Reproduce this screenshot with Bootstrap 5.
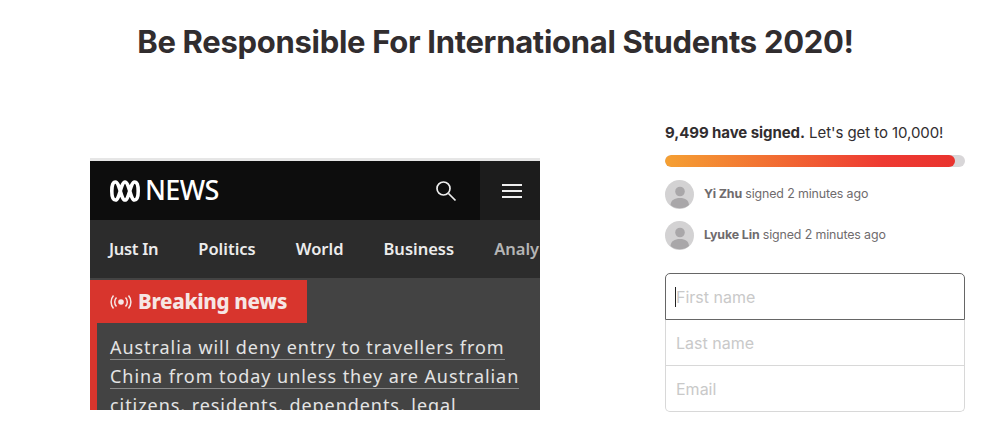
<!DOCTYPE html>
<html lang="en">
<head>
<meta charset="utf-8">
<title>Be Responsible For International Students 2020!</title>
<link href="https://cdn.jsdelivr.net/npm/bootstrap@5.3.0/dist/css/bootstrap.min.css" rel="stylesheet">
<style>
html,body{height:427px;overflow:hidden;background:#fff}
body{font-family:Inter,"Liberation Sans",sans-serif;color:#312d2f}
.pg-title{font-size:31px;font-weight:700;line-height:40px;padding:22px 0 0 8px;margin:0;letter-spacing:-.3px;color:#312d2f}
.pg-main{padding:0 18px 0 90px;margin-top:61px}
.shot{width:450px;height:252px;margin-top:35px;overflow:hidden;border-top:3px solid #e6e6e6;background:#434343;font-family:"Noto Sans",sans-serif}
.shot-top{height:59px;background:#0d0d0d}
.shot-logo{padding-left:20px;gap:5px;color:#fff;font-size:27px;font-weight:500;letter-spacing:-.6px}
.shot-search{padding-right:23px}
.shot-menu{width:60px;background:#1c1c1c;padding-left:3px}
.shot-nav{height:58px;background:#2c2c2c;color:#ececec;font-size:16.5px;font-weight:600;padding-left:19px;gap:40px;white-space:nowrap;overflow:hidden}
.shot-nav span:first-child{letter-spacing:-.3px}
.shot-nav span:last-child{color:#b5b5b5}
.shot-flag{width:217px;height:43px;margin-top:2px;background:#d8352d;color:#f6e6e4;font-size:20.5px;font-weight:800;padding-left:20px;gap:6px;letter-spacing:-.3px}
.shot-story{border-left:7px solid #d8352d;padding:13px 0 0 13px;color:#e4e4e4;font-size:18px;letter-spacing:.94px;white-space:nowrap}
.shot-story span{display:block;width:fit-content;line-height:23px;margin-bottom:5px;border-bottom:1px solid #8a8a8a}
.side{width:300px}
.goal{font-size:15px;line-height:20px;margin:0 0 12px;letter-spacing:-.07px}
.goal b{font-weight:700}
.goal-track{height:12px;border-radius:6px;background:#d8d6d8}
.goal-fill{background:linear-gradient(90deg,#f5a033,#ee3a32 75%,#e9332e);border-radius:6px}
.signer{height:41px;gap:10px;font-size:12.4px;color:#6f6b6d;letter-spacing:-.13px}
.signer b{font-weight:700}
.signer svg{flex:none}
.signers{margin-top:7px}
.sign-form{margin-top:17px;position:relative}
.sign-form .form-control{height:46px;border-radius:0;border:1px solid #d8d8d8;border-top-width:0;padding:0 10px;font-size:16px;font-family:Inter,sans-serif;box-shadow:none}
.sign-form .form-control::placeholder{color:#c9c9c9;opacity:1}
.sign-form .form-control:first-of-type{height:47px;border:1px solid #666;border-radius:5px 5px 0 0}
.sign-form .form-control:last-of-type{border-radius:0 0 5px 5px}
.caret-mark{position:absolute;left:10px;top:14px;width:1px;height:20px;background:#222}
</style>
</head>
<body>
<h1 class="pg-title text-center">Be Responsible For International Students 2020!</h1>
<div class="pg-main d-flex justify-content-between align-items-start">
  <div class="shot">
    <div class="shot-top d-flex align-items-center">
      <div class="shot-logo d-flex align-items-center flex-grow-1">
        <svg width="30" height="22" viewBox="0 0 30 22" fill="none" stroke="#fff" stroke-width="3.600"><path d="M5.500 2C3 2 1.800 5 1.800 11S3 20 5.500 20C9.500 20 11 2 15 2S20.500 20 24.500 20C27 20 28.200 17 28.200 11S27 2 24.500 2C20.500 2 19 20 15 20S9.500 2 5.500 2Z"/></svg>
        <span>NEWS</span>
      </div>
      <div class="shot-search d-flex">
        <svg width="22" height="22" viewBox="0 0 22 22" fill="none" stroke="#eee" stroke-width="1.700"><circle cx="8.500" cy="8.500" r="6.500"/><path d="M13.500 13.500 20.500 20.500"/></svg>
      </div>
      <div class="shot-menu h-100 d-flex align-items-center justify-content-center">
        <svg width="20" height="14" viewBox="0 0 20 14" fill="#eee"><rect y="0" width="20" height="2"/><rect y="6" width="20" height="2"/><rect y="12" width="20" height="2"/></svg>
      </div>
    </div>
    <div class="shot-nav d-flex align-items-center"><span>Just In</span><span>Politics</span><span>World</span><span>Business</span><span>Analy</span></div>
    <div class="shot-flag d-flex align-items-center">
      <svg width="22" height="14" viewBox="0 0 22 14" fill="none" stroke="#f6e6e4" stroke-width="1.500"><circle cx="11" cy="7" r="2.800" fill="#f6e6e4" stroke="none"/><path d="M6.500 2.500a6.500 6.500 0 0 0 0 9M15.500 2.500a6.500 6.500 0 0 1 0 9M3.500 .5a10 10 0 0 0 0 13M18.500 .5a10 10 0 0 1 0 13"/></svg>
      <span>Breaking news</span>
    </div>
    <div class="shot-story">
      <span>Australia will deny entry to travellers from</span>
      <span>China from today unless they are Australian</span>
      <span>citizens, residents, dependents, legal</span>
    </div>
  </div>
  <div class="side">
    <p class="goal"><b>9,499 have signed.</b> Let's get to 10,000!</p>
    <div class="progress goal-track"><div class="progress-bar goal-fill" style="width:96.500%"></div></div>
    <div class="signers">
      <div class="signer d-flex align-items-center">
        <svg width="29" height="29" viewBox="0 0 29 29"><circle cx="14.500" cy="14.500" r="14.500" fill="#d3d2d3"/><circle cx="15" cy="11.500" r="4.800" fill="#a9a7a9"/><path d="M5.500 25c.5-5 4-7 9.500-7s8.500 2 9 7a14.500 14.500 0 0 1-18.500 0Z" fill="#a9a7a9"/></svg>
        <div><b>Yi Zhu</b> signed 2 minutes ago</div>
      </div>
      <div class="signer d-flex align-items-center">
        <svg width="29" height="29" viewBox="0 0 29 29"><circle cx="14.500" cy="14.500" r="14.500" fill="#d3d2d3"/><circle cx="15" cy="11.500" r="4.800" fill="#a9a7a9"/><path d="M5.500 25c.5-5 4-7 9.500-7s8.500 2 9 7a14.500 14.500 0 0 1-18.500 0Z" fill="#a9a7a9"/></svg>
        <div><b>Lyuke Lin</b> signed 2 minutes ago</div>
      </div>
    </div>
    <form class="sign-form">
      <input class="form-control" type="text" placeholder="First name">
      <input class="form-control" type="text" placeholder="Last name">
      <input class="form-control" type="email" placeholder="Email">
      <span class="caret-mark"></span>
    </form>
  </div>
</div>
<script src="https://cdn.jsdelivr.net/npm/bootstrap@5.3.0/dist/js/bootstrap.bundle.min.js"></script>
</body>
</html>
